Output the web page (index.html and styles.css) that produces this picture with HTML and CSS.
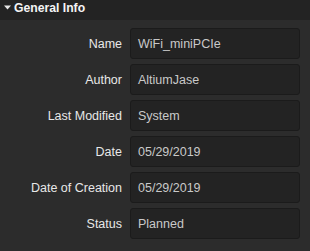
FILE: index.html
```html
<!DOCTYPE html>
<html>
<head>
<meta charset="utf-8">
<link rel="stylesheet" href="styles.css">
</head>
<body>
<div class="panel">
  <div class="header">
    <svg class="caret" width="7" height="5" viewBox="0 0 7 5"><path d="M0 0.5 L7 0.5 L3.5 4.5 Z" fill="#e6e6e6"/></svg>
    <span class="title">General Info</span>
  </div>
  <div class="body">
    <div class="row"><div class="label">Name</div><div class="field">WiFi_miniPCIe</div></div>
    <div class="row"><div class="label">Author</div><div class="field">AltiumJase</div></div>
    <div class="row"><div class="label">Last Modified</div><div class="field">System</div></div>
    <div class="row"><div class="label">Date</div><div class="field">05/29/2019</div></div>
    <div class="row"><div class="label">Date of Creation</div><div class="field">05/29/2019</div></div>
    <div class="row"><div class="label">Status</div><div class="field">Planned</div></div>
  </div>
</div>
</body>
</html>
```
FILE: styles.css
```css
html, body {
  margin: 0;
  padding: 0;
  background: #2b2b2b;
}
.panel {
  width: 310px;
  height: 251px;
  font-family: "Liberation Sans", Arial, sans-serif;
  font-size: 12.5px;
  background: #2c2c2c;
}
.header {
  height: 20px;
  background: #232323;
  display: flex;
  align-items: center;
  padding-left: 4px;
  gap: 3px;
}
.caret {
  display: block;
  margin-top: -5px;
}
.title {
  color: #f4f4f4;
  font-weight: bold;
  font-size: 12.2px;
  margin-top: -5px;
}
.body {
  display: flex;
  flex-direction: column;
  gap: 5px;
  padding-top: 8px;
}
.row {
  display: flex;
  align-items: center;
  height: 31px;
}
.label {
  text-align: right;
  color: #e8e8e8;
  padding-right: 8px;
  box-sizing: border-box;
  width: 130px;
}
.field {
  width: 170px;
  height: 31px;
  box-sizing: border-box;
  background: #232323;
  border: 1px solid #1b1b1b;
  border-radius: 3px;
  color: #c9c9c9;
  padding-left: 7px;
  display: flex;
  align-items: center;
}
```
